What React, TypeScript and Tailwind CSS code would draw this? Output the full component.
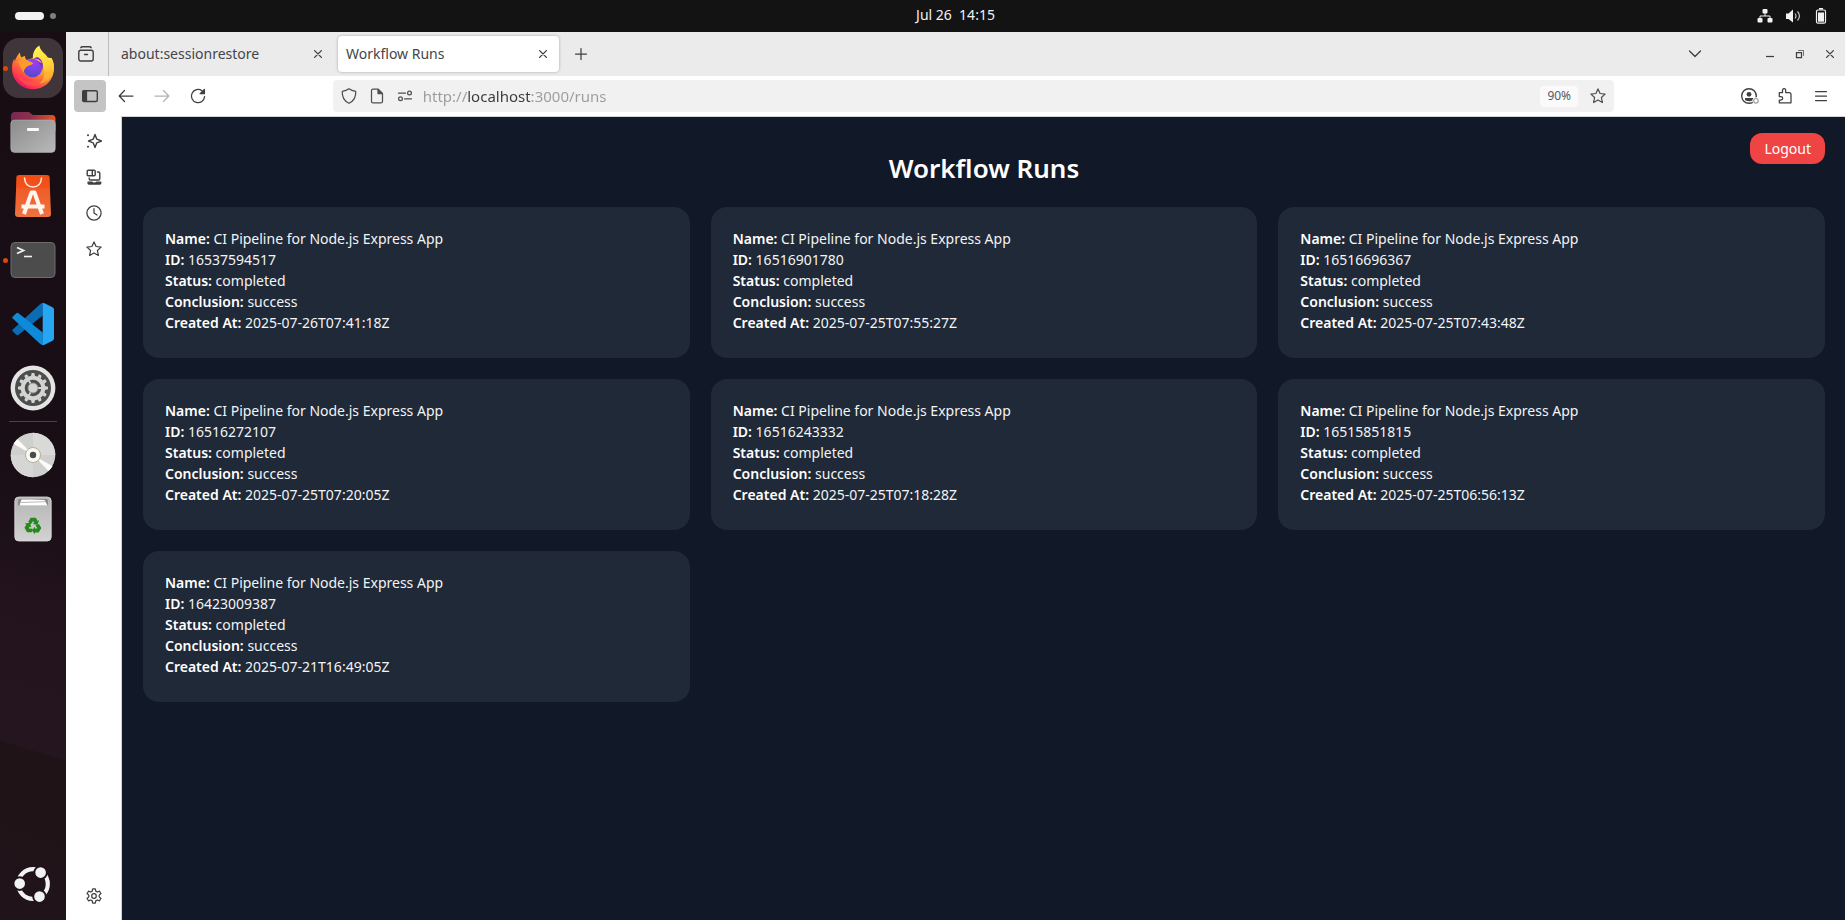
import React from "react";

type Run = { id: string; createdAt: string };

const runs: Run[] = [
  { id: "16537594517", createdAt: "2025-07-26T07:41:18Z" },
  { id: "16516901780", createdAt: "2025-07-25T07:55:27Z" },
  { id: "16516696367", createdAt: "2025-07-25T07:43:48Z" },
  { id: "16516272107", createdAt: "2025-07-25T07:20:05Z" },
  { id: "16516243332", createdAt: "2025-07-25T07:18:28Z" },
  { id: "16515851815", createdAt: "2025-07-25T06:56:13Z" },
  { id: "16423009387", createdAt: "2025-07-21T16:49:05Z" },
];

function Line({ children, className = "size-4" }: { children: React.ReactNode; className?: string }) {
  return (
    <svg
      viewBox="0 0 16 16"
      className={className}
      fill="none"
      stroke="currentColor"
      strokeWidth="1.25"
      strokeLinecap="round"
      strokeLinejoin="round"
      aria-hidden="true"
    >
      {children}
    </svg>
  );
}

const starPath =
  "M8 .9l2.1 4.6 5 .6-3.7 3.4 1 5L8 12l-4.400 2.500 1-5L.9 6.100l5-.6z";

function FirefoxLogo() {
  return (
    <svg viewBox="0 0 48 48" className="size-12" aria-hidden="true">
      <defs>
        <linearGradient id="ffBody" x1="0.85" y1="0.1" x2="0.2" y2="0.95">
          <stop offset="0" stopColor="#fff04f" />
          <stop offset="0.3" stopColor="#ffb72b" />
          <stop offset="0.55" stopColor="#ff7139" />
          <stop offset="0.8" stopColor="#ff3750" />
          <stop offset="1" stopColor="#e3106f" />
        </linearGradient>
        <radialGradient id="ffGlobe" cx="0.6" cy="0.2" r="0.9">
          <stop offset="0" stopColor="#a43ae8" />
          <stop offset="0.5" stopColor="#7345e6" />
          <stop offset="1" stopColor="#4a4bb8" />
        </radialGradient>
        <linearGradient id="ffFlame" x1="0.5" y1="0" x2="0.7" y2="1">
          <stop offset="0" stopColor="#fff255" />
          <stop offset="0.5" stopColor="#ffd43a" />
          <stop offset="1" stopColor="#ff9a2c" />
        </linearGradient>
      </defs>
      <path
        d="M11 8.500C11 11 11.700 12.500 12.500 13.400C14 12.600 15 12.200 16 12C16 14 16.600 15 18 16L30 12L42.700 14.300C44.400 17.500 45.200 21 45 25C44.500 36.500 35.500 45.200 24 45.200C12 45.200 3 36 3 24C3 20.500 3.700 17.500 5.300 14.600L5.800 17.500C7 13.800 8.500 10.800 11 8.500Z"
        fill="url(#ffBody)"
      />
      <path
        d="M30.300 1.500C31 5.500 33.500 7.500 36.500 10.500C38.500 12.500 39.300 14.500 39.800 16.800L42.500 14.300C45 19 45.600 25 43.500 30C41 36 36 39 30 39.500C36 35 37 28 34 22C32 18 28.500 16.500 24 15.500C23.300 9.500 25.500 4.500 30.300 1.500Z"
        fill="url(#ffFlame)"
      />
      <circle cx="23.700" cy="24" r="9.300" fill="url(#ffGlobe)" />
      <path d="M24 14.800c4-.4 7 1 9 4.200-1.500-.7-2.500-.8-3.600-.5 3 2.300 3.800 5.500 3.300 9 2.500-5 1.500-12.500-4.500-14.500z" fill="#7d2bd0" />
      <path
        d="M9 17.500C12 16 15 16.500 18 16.200C20.500 17.500 23.500 18 24.200 19.200C23.500 21 20.500 21 18.500 22.200C16 24 14.600 26 15 28.500C12 26 11 21.500 9 17.500Z"
        fill="#ff9a2c"
      />
      <path d="M8 27c2.500 7.500 9 11.500 17 10.500 4.500-.6 7-2.500 9-4.500-1 6-5 9-11 9C14 42 8.500 35 8 27Z" fill="#ff5a45" opacity="0.6" />
    </svg>
  );
}

function FilesLogo() {
  return (
    <svg viewBox="0 0 48 48" className="size-12" aria-hidden="true">
      <defs>
        <linearGradient id="flBack" x1="0" y1="0" x2="1" y2="0">
          <stop offset="0" stopColor="#77284f" />
          <stop offset="0.45" stopColor="#8f2f4e" />
          <stop offset="1" stopColor="#ea5420" />
        </linearGradient>
        <linearGradient id="flFront" x1="0" y1="0" x2="1" y2="1">
          <stop offset="0" stopColor="#8b8b8b" />
          <stop offset="1" stopColor="#b9b9b9" />
        </linearGradient>
      </defs>
      <path d="M2 8q0-4 4-4h13q2 0 3 1.500t3 1.500h18q3.500 0 3.500 4v12H2z" fill="url(#flBack)" />
      <rect x="1.700" y="12" width="44.600" height="32.500" rx="4" fill="url(#flFront)" stroke="#c9c9c9" strokeOpacity="0.5" strokeWidth="0.8" />
      <rect x="18" y="20" width="12" height="3" rx="1" fill="#fafafa" />
    </svg>
  );
}

function AppCenterLogo() {
  return (
    <svg viewBox="0 0 48 48" className="size-12" aria-hidden="true">
      <defs>
        <linearGradient id="acBag" x1="0" y1="0" x2="0" y2="1">
          <stop offset="0" stopColor="#f1511b" />
          <stop offset="1" stopColor="#ee7240" />
        </linearGradient>
      </defs>
      <path d="M10.500 3h27q2.800 0 3 2.800L42 42q0 3-3 3H9q-3 0-3-3L7.500 5.800Q7.700 3 10.500 3z" fill="url(#acBag)" />
      <path d="M7.500 3.500h33l.5 12.500H7z" fill="#f5480f" opacity="0.5" />
      <path d="M15.500 6c.5 6 4 9 8.500 9s8-3 8.500-9" fill="none" stroke="#ffe9df" strokeWidth="1.600" strokeLinecap="round" />
      <path d="M15 42l7.500-21.500h3L33 42M12.500 34.500h23" fill="none" stroke="#fff4ee" strokeWidth="4" strokeLinejoin="round" />
    </svg>
  );
}

function TerminalLogo() {
  return (
    <svg viewBox="0 0 48 48" className="size-12" aria-hidden="true">
      <rect x="2" y="6.500" width="44" height="35" rx="4" fill="#4c4c4c" stroke="#6d6d6d" strokeWidth="1" />
      <path d="M8 11.500l6.500 3L8 17.500" fill="none" stroke="#f2f2f2" strokeWidth="1.800" />
      <path d="M15 20.500h8" stroke="#f2f2f2" strokeWidth="1.600" />
    </svg>
  );
}

function CodeLogo() {
  return (
    <svg viewBox="0 0 48 48" className="size-12" aria-hidden="true">
      <path d="M34 3L33.700 15.500L9.500 34.700Q8.500 35.500 7.400 34.800L3.800 31.600Q2.700 30.600 3.800 29.600L31 4.200Q32.300 3 34 3z" fill="#0a6cb5" />
      <path d="M34 45L33.700 32.500L9.500 13.300Q8.500 12.500 7.400 13.200L3.800 16.400Q2.700 17.400 3.800 18.400L31 43.800Q32.300 45 34 45z" fill="#0d8bd9" />
      <path d="M33.700 3.300Q34.500 2.900 35.500 3.300L43.500 7.200Q45 7.900 45 9.500V38.500Q45 40.100 43.500 40.800L35.500 44.700Q34.500 45.100 33.700 44.700z" fill="#27a6f2" />
    </svg>
  );
}

const teeth = [0, 30, 60, 90, 120, 150, 180, 210, 240, 270, 300, 330];

function SettingsLogo() {
  return (
    <svg viewBox="0 0 48 48" className="size-12" aria-hidden="true">
      <circle cx="24" cy="24" r="22.400" fill="#e4e4e2" />
      <circle cx="24" cy="24" r="18" fill="#4b4e4d" />
      <g fill="#d4d4d2">
        {teeth.map((a) => (
          <path key={a} d="M22 12l.7-3h2.600l.7 3z" transform={`rotate(${a} 24 24)`} />
        ))}
      </g>
      <circle cx="24" cy="24" r="10.300" fill="none" stroke="#d4d4d2" strokeWidth="4" />
      <path d="M24 24h9M24 24l-4.500-8M24 24l-4.500 8" stroke="#d4d4d2" strokeWidth="1.800" />
      <circle cx="24" cy="24" r="5" fill="#d4d4d2" stroke="#8a8c8b" strokeWidth="0.800" />
    </svg>
  );
}

function DiscLogo() {
  return (
    <svg viewBox="0 0 48 48" className="size-12" aria-hidden="true">
      <circle cx="24" cy="24" r="22.300" fill="#cfcfcd" />
      <path d="M24 24L24 1.700A22.300 22.300 0 0 1 46.300 24z" fill="#d9d9d7" />
      <path d="M24 24L24 46.300A22.300 22.300 0 0 1 1.700 24z" fill="#d6d6d4" />
      <path d="M24 24L4.500 12.800A22.300 22.300 0 0 1 8.500 8z" fill="#fbfbf7" />
      <path d="M24 24L43.500 35.200A22.300 22.300 0 0 1 39.500 40z" fill="#fbfbf7" />
      <circle cx="24" cy="24" r="7.500" fill="#fafaf7" stroke="#b7ad96" strokeWidth="1" />
      <circle cx="24" cy="24" r="3.200" fill="#4a4c4c" />
    </svg>
  );
}

function TrashLogo() {
  return (
    <svg viewBox="0 0 48 48" className="size-12" aria-hidden="true">
      <defs>
        <linearGradient id="trBin" x1="0" y1="0" x2="0" y2="1">
          <stop offset="0" stopColor="#b5b5b5" />
          <stop offset="1" stopColor="#d2d2d2" />
        </linearGradient>
      </defs>
      <rect x="5.800" y="2" width="36.400" height="44" rx="4" fill="url(#trBin)" stroke="#e0e0e0" strokeWidth="0.800" />
      <path d="M9 10.500V6q0-2 2-2h26q2 0 2 2v4.500z" fill="#8a8a8a" />
      <path d="M10.500 10.500l2-6h10l13 .5 3 5.500z" fill="#fff" />
      <path d="M12 7.500l24-.8" stroke="#9a9a9a" strokeWidth="0.700" />
      <g fill="#26891c">
        {[0, 120, 240].map((a) => (
          <g key={a} transform={`rotate(${a} 24 31)`}>
            <path d="M19.300 26.800l2.300-4h5.200l1.900 3.200 1.400-.8-1.700 4.600-4.800-.8 1.600-1-1.200-2-2.200 3.400z" />
          </g>
        ))}
      </g>
    </svg>
  );
}

function UbuntuLogo() {
  return (
    <svg viewBox="0 0 48 48" className="size-12" aria-hidden="true">
      <circle cx="24" cy="24" r="14.800" fill="none" stroke="#f2f2f2" strokeWidth="4.200" />
      <g fill="#f2f2f2" stroke="#20131a" strokeWidth="2">
        <circle cx="10.700" cy="23.600" r="6.300" />
        <circle cx="31.600" cy="12.600" r="6.300" />
        <circle cx="30.500" cy="36.600" r="6.300" />
      </g>
    </svg>
  );
}

function DockItem({ label, active, running, children }: { label: string; active?: boolean; running?: boolean; children: React.ReactNode }) {
  return (
    <button type="button" aria-label={label} className="relative flex h-16 w-full shrink-0 items-center justify-center">
      <span className={active ? "flex size-[60px] items-center justify-center rounded-2xl bg-[#40353b]" : "flex items-center justify-center"}>
        {children}
      </span>
      {running && <span className="absolute left-[3px] top-[30px] size-[5px] rounded-full bg-[#d9480f]" />}
    </button>
  );
}

function ToolButton({ label, className = "text-[#3f3f42]", children }: { label: string; className?: string; children: React.ReactNode }) {
  return (
    <button type="button" aria-label={label} className={`flex size-8 shrink-0 items-center justify-center rounded ${className}`}>
      {children}
    </button>
  );
}

function CloseGlyph() {
  return (
    <Line className="size-3">
      <path d="M3.500 3.500l9 9M12.500 3.500l-9 9" strokeWidth="1.800" />
    </Line>
  );
}

function Tab({ title, active }: { title: string; active?: boolean }) {
  return (
    <div
      className={`flex h-9 w-[221px] items-center justify-between rounded pl-2 pr-1 text-[#45454a] ${
        active ? "bg-white shadow-[0_0_3px_rgba(0,0,0,0.3)]" : ""
      }`}
    >
      <button type="button" role="tab" aria-selected={!!active} className="text-[14px] leading-5">
        {title}
      </button>
      <button type="button" aria-label={`Close ${title}`} className="flex size-6 items-center justify-center text-[#3f3f42]">
        <CloseGlyph />
      </button>
    </div>
  );
}

function TopBar() {
  return (
    <header className="flex h-8 shrink-0 items-center bg-[#131313] text-[#f2f2f2]">
      <button type="button" aria-label="Activities" className="flex w-[66px] items-center gap-[6px] pl-[15px]">
        <span className="h-2 w-[29px] rounded-full bg-[#f2f2f2]" />
        <span className="size-[6px] rounded-full bg-[#808080]" />
      </button>
      <div className="grid flex-1 grid-cols-[1fr_auto_1fr] items-center pr-4">
        <span />
        <time className="whitespace-pre pb-0.5 pl-4 text-[14px] leading-5">Jul 26  14:15</time>
        <div className="flex items-center justify-end gap-3">
          <svg viewBox="0 0 16 16" className="size-4" fill="currentColor" aria-hidden="true">
            <rect x="5.500" y="1" width="5" height="4.500" rx="1" />
            <rect x="0.500" y="10" width="5" height="4.500" rx="1" />
            <rect x="10.500" y="10" width="5" height="4.500" rx="1" />
            <path d="M8 5v3M3 10.500V8h10v2.500" fill="none" stroke="currentColor" />
          </svg>
          <svg viewBox="0 0 16 16" className="size-4" aria-hidden="true">
            <path d="M1 5.500h2.500L8 1.500v13L3.500 11H1z" fill="currentColor" />
            <path d="M10 5.500q2 2.500 0 5M12.500 3.500q4 4.500 0 9" fill="none" stroke="currentColor" strokeWidth="1.200" opacity="0.8" />
          </svg>
          <svg viewBox="0 0 16 16" className="size-4" fill="none" stroke="currentColor" aria-hidden="true">
            <rect x="3.500" y="2" width="9" height="13.200" rx="1.500" strokeWidth="1.200" />
            <path d="M6 .8h4" strokeWidth="1.600" />
            <rect x="5" y="4.500" width="6" height="9.200" fill="currentColor" stroke="none" />
          </svg>
        </div>
      </div>
    </header>
  );
}

function Dock() {
  return (
    <nav
      aria-label="Dock"
      className="flex w-[66px] shrink-0 flex-col bg-[linear-gradient(197deg,#180d13_0%,#190e15_50%,#23131d_65%,#25151e_80.2%,#1f1317_80.3%,#20131a_100%)] py-1"
    >
      <DockItem label="Firefox" active running><FirefoxLogo /></DockItem>
      <DockItem label="Files"><FilesLogo /></DockItem>
      <DockItem label="App Center"><AppCenterLogo /></DockItem>
      <DockItem label="Terminal" running><TerminalLogo /></DockItem>
      <DockItem label="Visual Studio Code"><CodeLogo /></DockItem>
      <DockItem label="Settings"><SettingsLogo /></DockItem>
      <hr className="mx-[9px] my-px border-[#4b4247]" />
      <DockItem label="Disc"><DiscLogo /></DockItem>
      <DockItem label="Trash"><TrashLogo /></DockItem>
      <div className="flex-1" />
      <DockItem label="Show Apps"><UbuntuLogo /></DockItem>
    </nav>
  );
}

function TabStrip() {
  return (
    <div className="flex h-11 shrink-0 items-center bg-[#ebebeb] text-[#3f3f42]">
      <button type="button" aria-label="Recent browsing" className="flex h-full w-[43px] items-center justify-center border-r border-[#bdbdbd] pr-0.5">
        <Line>
          <rect x="0.800" y="4.200" width="14.400" height="10.800" rx="2" strokeWidth="1.400" />
          <path d="M2.800 1.700Q3.200.8 4.300.8h7.400q1.100 0 1.500.9" strokeWidth="1.400" />
          <path d="M6.500 8.500h3" strokeWidth="1.400" />
        </Line>
      </button>
      <div role="tablist" className="flex gap-1 pl-1">
        <Tab title="about:sessionrestore" />
        <Tab title="Workflow Runs" active />
      </div>
      <button type="button" aria-label="New tab" className="ml-1 flex size-9 items-center justify-center">
        <Line><path d="M8 2.500v11M2.500 8h11" /></Line>
      </button>
      <div className="flex-1" />
      <button type="button" aria-label="List all tabs" className="mr-11 flex size-8 items-center justify-center">
        <Line><path d="M2.500 5l5.500 5.500L13.500 5" /></Line>
      </button>
      <button type="button" aria-label="Minimize" className="flex h-8 w-[30px] items-center justify-center">
        <Line><path d="M4 10.500h8" strokeLinecap="butt" /></Line>
      </button>
      <button type="button" aria-label="Restore" className="flex h-8 w-[30px] items-center justify-center">
        <Line>
          <path d="M4.500 6.500h5v5h-5z" strokeLinejoin="miter" />
          <path d="M6.500 4.500h5v5" strokeLinejoin="miter" strokeWidth="1" opacity="0.700" />
        </Line>
      </button>
      <button type="button" aria-label="Close window" className="flex h-8 w-[30px] items-center justify-center">
        <CloseGlyph />
      </button>
    </div>
  );
}

function Toolbar() {
  return (
    <div className="flex h-10 shrink-0 items-center gap-1 bg-white px-2">
      <ToolButton label="Sidebar" className="bg-[#c4c4c4] text-[#3f3f42]">
        <Line>
          <rect x="0.700" y="2.700" width="14.600" height="10.800" rx="1.500" strokeWidth="1.400" />
          <path d="M1 3h3.500v10H1z" fill="currentColor" />
        </Line>
      </ToolButton>
      <ToolButton label="Back">
        <Line><path d="M15 8H1.500M6.500 2.500L1.200 8l5.300 5.500" /></Line>
      </ToolButton>
      <ToolButton label="Forward" className="text-[#b3b3b3]">
        <Line><path d="M1 8h13.500M9.500 2.500L14.800 8l-5.300 5.500" /></Line>
      </ToolButton>
      <ToolButton label="Reload">
        <Line>
          <path d="M14.600 8.500A6.600 6.600 0 1 1 12 2.800" />
          <path d="M14.400 1.500v4.200h-4.200z" fill="currentColor" />
        </Line>
      </ToolButton>
      <div className="flex-[2]" />
      <div className="flex h-8 flex-[23] items-center rounded bg-[#f1f1f1] pl-2 text-[#4f4f53]">
        <Line>
          <path d="M8 .8c2 1.500 4.200 2.200 6.700 2.500.4 5.500-1.700 9.700-6.700 12C3 13 .9 8.800 1.300 3.300 3.800 3 6 2.300 8 .8z" />
        </Line>
        <span className="ml-3 flex">
          <Line>
            <path d="M4 1.200h5.200l4.300 4.200v8q0 1.500-1.500 1.500H4q-1.500 0-1.500-1.500V2.700Q2.500 1.200 4 1.200z" />
            <path d="M9 1.500v4h4.200z" fill="currentColor" />
          </Line>
        </span>
        <span className="ml-3 flex">
          <Line>
            <path d="M1.500 5.200h7M7.500 10.800h7" />
            <circle cx="12.500" cy="5" r="1.900" />
            <circle cx="3.500" cy="10.800" r="1.900" />
          </Line>
        </span>
        <input
          type="text"
          aria-label="Address"
          defaultValue="http://localhost:3000/runs"
          className="ml-[10px] min-w-0 flex-1 bg-transparent bg-[linear-gradient(90deg,#9b9b9b_45px,#3a3a3e_45px,#3a3a3e_108px,#9b9b9b_108px)] bg-clip-text text-[15px] leading-5 text-transparent caret-black outline-none"
        />
        <button type="button" className="h-[21px] w-[38px] rounded bg-[#fafafa] text-[12px] leading-5 text-[#58585c]">90%</button>
        <button type="button" aria-label="Bookmark" className="ml-1 flex size-8 items-center justify-center">
          <Line><path d={starPath} /></Line>
        </button>
      </div>
      <div className="flex-[2]" />
      <ToolButton label="Account">
        <svg viewBox="0 0 16 16" className="size-4 overflow-visible" aria-hidden="true">
          <circle cx="8" cy="8" r="7.300" fill="none" stroke="currentColor" strokeWidth="1.400" />
          <circle cx="8" cy="6.300" r="2.400" fill="currentColor" />
          <path d="M4 10h8.500v2Q8 14.500 4 12z" fill="currentColor" />
          <circle cx="15" cy="12.800" r="3.600" fill="#fff" />
          <circle cx="15" cy="12.800" r="2.300" fill="#fff" stroke="#a0a0a0" strokeWidth="1.200" />
        </svg>
      </ToolButton>
      <ToolButton label="Extensions">
        <Line>
          <path d="M2.300 4.500h3.200V2.300q0-1.700 1.600-1.700t1.600 1.700v2.200H12q2 0 2 2v8.300H2.300V12h1.500q1.900 0 1.900-1.700T3.800 8.600H2.300z" />
        </Line>
      </ToolButton>
      <ToolButton label="Menu">
        <Line><path d="M2.500 3.500h11M2.500 8h11M2.500 12.500h11" /></Line>
      </ToolButton>
    </div>
  );
}

function Sidebar() {
  return (
    <aside className="flex w-[55px] shrink-0 flex-col items-center gap-1 bg-white pb-2 pt-[9px]">
      <ToolButton label="AI chatbot">
        <Line>
          <path d="M9 1.500l1.800 4.700L15.500 8l-4.700 1.800L9 14.500 7.200 9.800 2.500 8l4.700-1.800z" strokeWidth="1.400" />
          <circle cx="2" cy="2.200" r="1" fill="currentColor" stroke="none" />
          <circle cx="2" cy="13.800" r="1" fill="currentColor" stroke="none" />
        </Line>
      </ToolButton>
      <ToolButton label="Synced tabs">
        <Line>
          <path d="M2.200 1.200h6q1 0 1 1v3.600q0 1-1 1h-6q-1 0-1-1V2.200q0-1 1-1zM6.300 1.200v5.600" strokeWidth="1.400" />
          <path d="M11.500 3h1q1.300 0 1.300 1.300v5.400q0 1.300-1.300 1.300h-8q-1.300 0-1.300-1.300V9" strokeWidth="1.400" />
          <path d="M2 13.200h4l1 .8h2.500l1-.8h4.300v.8q0 1-1 1H3q-1 0-1-1z" fill="currentColor" />
        </Line>
      </ToolButton>
      <ToolButton label="History">
        <Line>
          <circle cx="8" cy="8" r="7.100" />
          <path d="M8 3.500V8l3 2" />
        </Line>
      </ToolButton>
      <ToolButton label="Bookmarks">
        <Line><path d={starPath} /></Line>
      </ToolButton>
      <div className="flex-1" />
      <ToolButton label="Customize sidebar">
        <Line>
          <path d="M6.700.8h2.600l.5 2.300 1.500.9 2.200-.8 1.400 2.300-1.700 1.600v1.800l1.700 1.600-1.400 2.300-2.200-.8-1.500.9-.5 2.300H6.700l-.5-2.300-1.500-.9-2.200.8-1.400-2.300 1.700-1.600V7.100L1.100 5.500l1.400-2.300 2.200.8 1.500-.9z" />
          <circle cx="8" cy="8" r="2.300" />
        </Line>
      </ToolButton>
    </aside>
  );
}

function Field({ name, value }: { name: string; value: string }) {
  return (
    <p>
      <strong className="font-semibold text-white">{name}:</strong> {value}
    </p>
  );
}

function RunsPage() {
  return (
    <main className="flex-1 border-l border-t border-[#d4d4d6] bg-[#111827] pl-[21px] pr-5 text-white">
      <div className="grid grid-cols-[1fr_auto_1fr] items-start pt-4">
        <span />
        <h1 className="pb-[21px] pt-[17px] text-[26px] font-semibold leading-9">Workflow Runs</h1>
        <button type="button" className="h-[31px] justify-self-end rounded-xl bg-[#ef4444] px-[14px] text-[14px] leading-5">
          Logout
        </button>
      </div>
      <div className="grid grid-cols-3 gap-[21px]">
        {runs.map((run) => (
          <article key={run.id} className="rounded-2xl bg-[#1f2937] px-[22px] pb-[25px] pt-[21px] text-[14px] leading-[21px] text-[#f3f4f6]">
            <Field name="Name" value="CI Pipeline for Node.js Express App" />
            <Field name="ID" value={run.id} />
            <Field name="Status" value="completed" />
            <Field name="Conclusion" value="success" />
            <Field name="Created At" value={run.createdAt} />
          </article>
        ))}
      </div>
    </main>
  );
}

export default function App() {
  return (
    <div className="flex min-h-screen flex-col bg-[#131313] font-['Noto_Sans',sans-serif]">
      <TopBar />
      <div className="flex flex-1">
        <Dock />
        <div className="flex min-w-0 flex-1 flex-col">
          <TabStrip />
          <Toolbar />
          <div className="flex flex-1">
            <Sidebar />
            <RunsPage />
          </div>
        </div>
      </div>
    </div>
  );
}
